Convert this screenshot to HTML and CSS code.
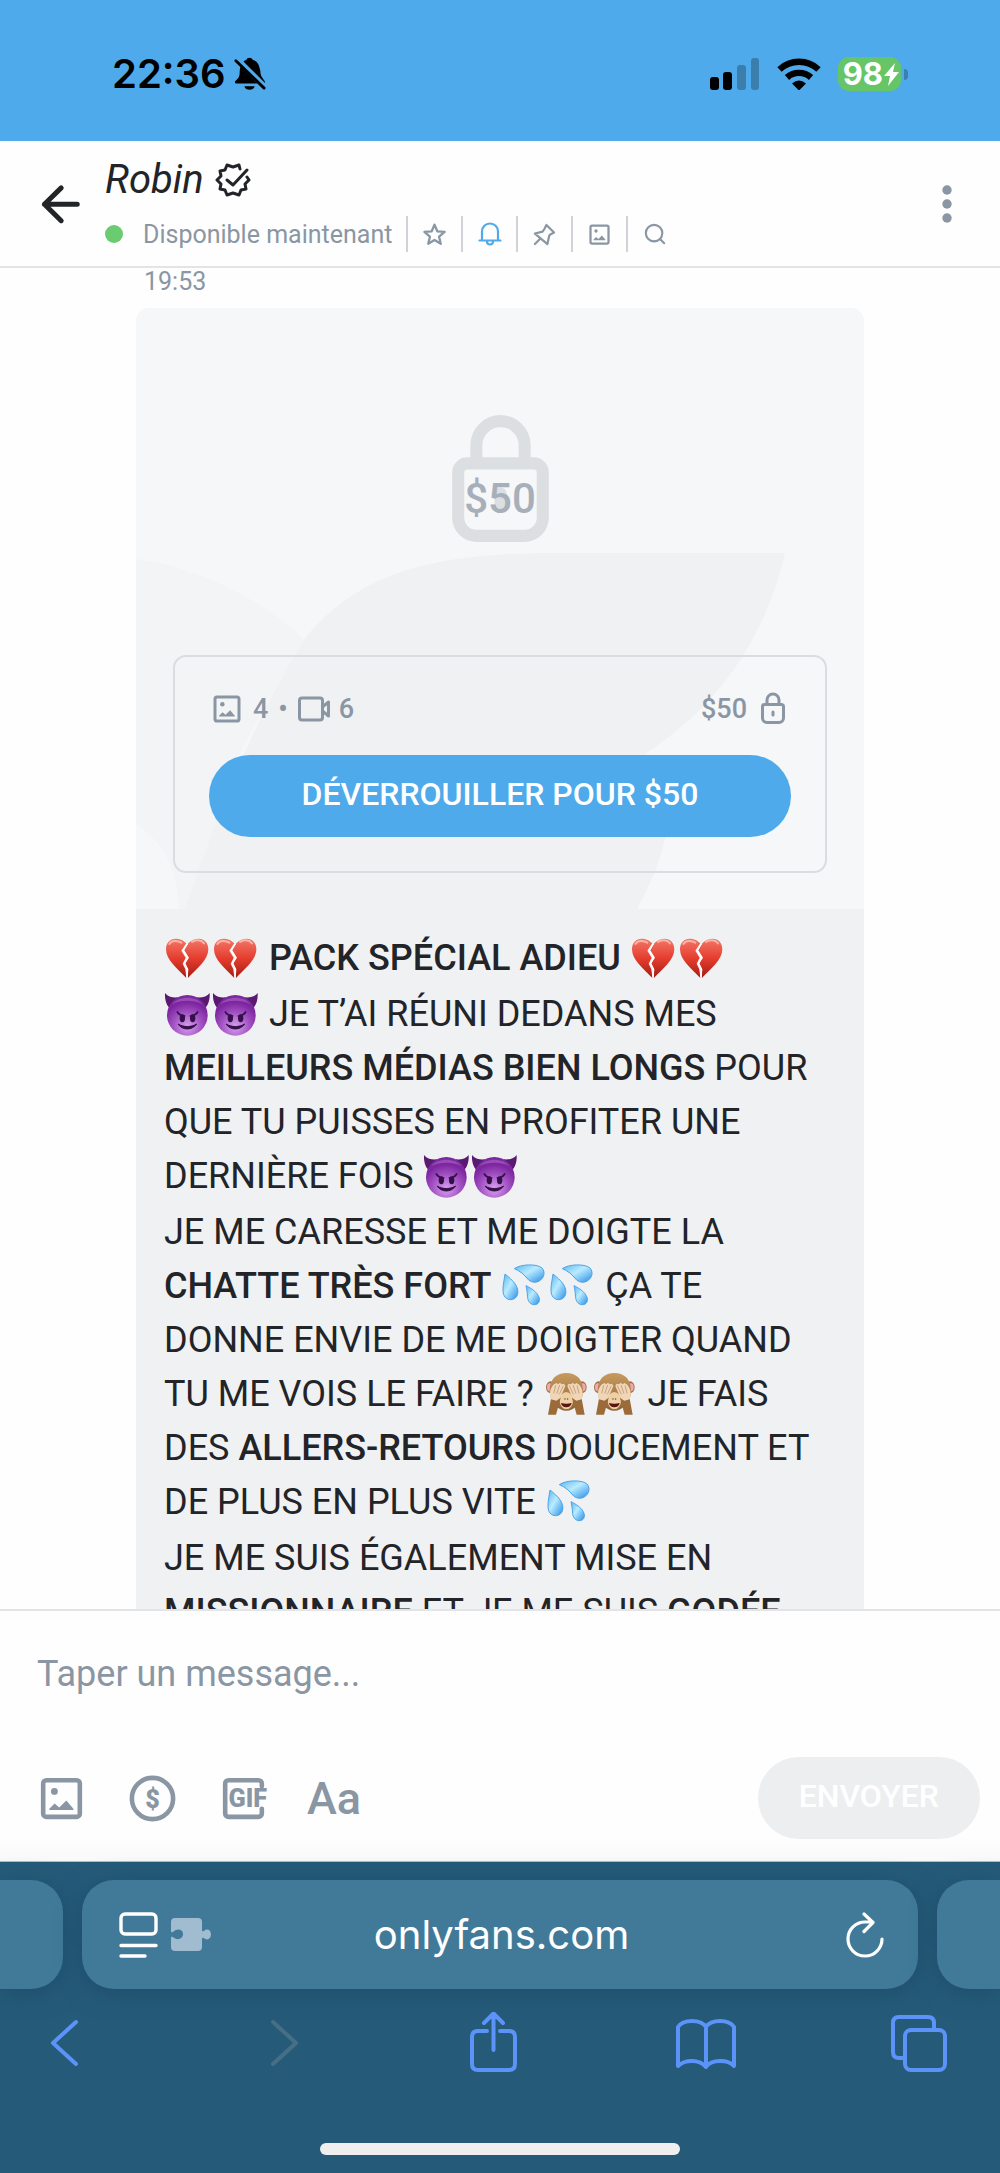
FILE: index.html
```html
<!DOCTYPE html>
<html lang="fr">
<head>
<meta charset="utf-8">
<meta name="viewport" content="width=device-width, initial-scale=1">
<title>Robin – Messages</title>
<link rel="stylesheet" href="styles.css">
</head>
<body>
<svg class="defs" aria-hidden="true">
  <defs>
    <linearGradient id="g-heart" x1="0" y1="0" x2="0" y2="1">
      <stop offset="0" stop-color="#f27867"/><stop offset=".5" stop-color="#e53d2e"/><stop offset="1" stop-color="#a81c14"/>
    </linearGradient>
    <radialGradient id="g-devil" cx=".5" cy=".78" r=".75">
      <stop offset="0" stop-color="#d8a2ee"/><stop offset=".45" stop-color="#a454c4"/><stop offset=".8" stop-color="#7d26a0"/><stop offset="1" stop-color="#7a2a9c"/>
    </radialGradient>
    <linearGradient id="g-drop" x1="0" y1="0" x2="1" y2="1">
      <stop offset="0" stop-color="#5fb4ee"/><stop offset=".45" stop-color="#b9ecff"/><stop offset="1" stop-color="#2b8de6"/>
    </linearGradient>
    <linearGradient id="g-fur" x1="0" y1="0" x2="0" y2="1">
      <stop offset="0" stop-color="#c79a5f"/><stop offset="1" stop-color="#8f6437"/>
    </linearGradient>
    <symbol id="e-heart" viewBox="0 0 144 144">
      <path d="M67 28C57 17 44 14 36 14 17 14 6 27 6 46c0 32 34 58 61 86l-3-26-8-17 9-18-13-21Z" fill="url(#g-heart)"/>
      <path d="M73 28c9-10 21-14 31-14 18 0 29 13 29 32 0 32-36 59-61 86l-1-27-8-16 12-18-14-22Z" fill="url(#g-heart)"/>
      <path d="M16 30c7-11 24-12 36-4M84 24c10-8 28-7 36 4" fill="none" stroke="#ffd0c8" stroke-width="6" stroke-linecap="round" opacity=".7"/>
      <path d="M70 29 57 49l14 21-9 18 9 18-2 24" fill="none" stroke="#fff" stroke-width="4"/>
    </symbol>
    <symbol id="e-devil" viewBox="0 0 144 144">
      <path d="M3 9c-1 20 4 36 13 44l27-31C27 24 11 20 3 9ZM137 9c1 20-4 36-13 44L97 22c16 2 32-2 40-13Z" fill="#5a1a72"/>
      <circle cx="70" cy="76" r="61" fill="url(#g-devil)"/>
      <path d="M25 42c20-25 70-25 90 0-25-13-65-13-90 0Z" fill="#c583df" opacity=".4"/>
      <ellipse cx="55" cy="85" rx="8" ry="12" fill="#35104a"/><ellipse cx="86" cy="85" rx="8" ry="12" fill="#35104a"/>
      <path d="M40 66q6 10 22 12M101 66q-6 10-22 12" fill="none" stroke="#35104a" stroke-width="5" stroke-linecap="round"/>
      <path d="M42 102c14 20 42 20 56 0-15 10-41 10-56 0Z" fill="#35104a" stroke="#35104a" stroke-width="3" stroke-linejoin="round"/>
    </symbol>
    <symbol id="e-drops" viewBox="0 0 144 144">
      <path d="M43 20C63 6 108 5 125 17c12 12 8 30-6 39-12 8-28 5-36-5C73 38 62 28 43 20Z" fill="url(#g-drop)" stroke="#4aa3ea" stroke-width="3"/>
      <path d="M15 36c14 12 34 27 38 47 3 18-7 30-21 30S9 102 9 84c0-18 4-32 6-48Z" fill="url(#g-drop)" stroke="#4aa3ea" stroke-width="3"/>
      <path d="M78 71c14 7 34 19 39 35 4 13-3 22-13 22-13 0-20-9-21-22-1-12-2-24-5-35Z" fill="url(#g-drop)" stroke="#4aa3ea" stroke-width="3"/>
    </symbol>
    <symbol id="e-monkey" viewBox="0 0 144 144">
      <ellipse cx="23" cy="52" rx="14" ry="18" fill="#a2733f"/><ellipse cx="117" cy="52" rx="14" ry="18" fill="#a2733f"/>
      <ellipse cx="20" cy="52" rx="8" ry="12" fill="#f0a9b4"/><ellipse cx="120" cy="52" rx="8" ry="12" fill="#f0a9b4"/>
      <path d="M20 62C20 26 42 9 70 9s50 17 50 53c0 36-26 60-50 60S20 98 20 62Z" fill="url(#g-fur)"/>
      <ellipse cx="70" cy="92" rx="20" ry="26" fill="#efcfa5"/>
      <circle cx="66" cy="87" r="2" fill="#5b3a1e"/><circle cx="74" cy="87" r="2" fill="#5b3a1e"/>
      <path d="M54 99q16 5 32 0c-2 17-30 17-32 0Z" fill="#5a1512"/>
      <path d="M15 134 25 80l28 3-14 51ZM125 134 115 80l-28 3 14 51Z" fill="#9b6c3a"/>
      <path d="M24 88c-8-16-1-36 9-45l7-4 5 4 6-5 5 5 7-2 4 7-15 36-12 8ZM116 88c8-16 1-36-9-45l-7-4-5 4-6-5-5 5-7-2-4 7 15 36 12 8Z" fill="#f1d5b8"/>
      <path d="M38 46 32 70M50 45 41 71M61 47 49 73M102 46l6 24M90 45l9 26M79 47l12 26" stroke="#c9a27c" stroke-width="3" fill="none"/>
    </symbol>
    <symbol id="i-image" viewBox="0 0 24 24">
      <rect x="4" y="4" width="16" height="16" rx="1.4" fill="none" stroke="currentColor" stroke-width="2"/>
      <circle cx="8.9" cy="8.9" r="1.5" fill="currentColor"/>
      <path d="M6.7 17v-.5L9 14.2l2 1.7 3.1-3 3.1 3.6v.5Z" fill="currentColor"/>
    </symbol>
    <symbol id="i-lock" viewBox="0 0 24 24">
      <path fill-rule="evenodd" fill="currentColor" d="M7 8V6a5 5 0 0 1 10 0v2h.5A2.5 2.5 0 0 1 20 10.500V18a4 4 0 0 1-4 4H8a4 4 0 0 1-4-4v-7.500A2.500 2.500 0 0 1 6.500 8Zm2 0h6V6a3 3 0 0 0-6 0Zm-2.500 2a.5.5 0 0 0-.5.5V18a2 2 0 0 0 2 2h8a2 2 0 0 0 2-2v-7.500a.5.5 0 0 0-.5-.5Z"/>
      <rect x="11" y="13" width="2" height="4" rx="1" fill="currentColor"/>
    </symbol>
  </defs>
</svg>

<div class="app">
  <div class="status-bar">
    <div class="status-group">
      <span class="clock">22:36</span>
      <svg width="32" height="34" viewBox="0 0 34 36" role="img" aria-label="Silencieux">
        <path d="M1 27c0-3 5-3 5-10C6 9 9 4 13 3c1-3 6-3 7 0 5 1 7 6 8 12 0 7 5 9 5 12 0 1-1 1-2 1H3c-1 0-2 0-2-1ZM11 31h11c-1 5-10 5-11 0Z"/>
        <path d="m1 0 33 33" stroke="#4eaaea" stroke-width="6"/>
        <path d="m2 4 30 29" stroke="#000" stroke-width="3" stroke-linecap="round"/>
      </svg>
    </div>
    <div class="status-group status-right">
      <svg width="50" height="34" viewBox="0 0 50 34" role="img" aria-label="Réseau">
        <rect y="20" width="9" height="13" rx="3"/><rect x="13" y="15" width="9" height="18" rx="3"/>
        <g opacity=".25"><rect x="27" y="8" width="9" height="25" rx="3"/><rect x="41" y="1" width="8" height="32" rx="3"/></g>
      </svg>
      <svg width="44" height="34" viewBox="0 0 44 34" role="img" aria-label="Wi-Fi">
        <g fill="none" stroke="#000" stroke-width="6.400"><path d="M2.500 12.500a28.600 28.600 0 0 1 39 0"/><path d="M10 20.500a18 18 0 0 1 24 0"/></g>
        <path d="M15 26.500q7-6 14 0l-6 6q-1 1-2 0Z"/>
      </svg>
      <span class="battery-wrap">
        <span class="battery">98<svg width="15" height="23" viewBox="0 0 15 23" aria-hidden="true"><path d="M11 0 0 13h6L4 23 15 9H9Z" fill="#fff"/></svg></span>
        <span class="battery-tip"></span>
      </span>
    </div>
  </div>

  <header class="chat-header">
    <button class="icon-btn" type="button" aria-label="Retour">
      <svg width="55" height="55" viewBox="0 0 24 24" fill="none" stroke="currentColor" stroke-width="2.200" stroke-linecap="round" stroke-linejoin="round"><path d="M19.300 12.300H5M12.300 5.200 5 12.300l7.300 7.200"/></svg>
    </button>
    <div class="chat-info">
      <h1 class="chat-name">Robin
        <svg width="36" height="36" viewBox="0 0 36 36" fill="none" stroke="currentColor" stroke-width="3" stroke-linecap="round" stroke-linejoin="round" role="img" aria-label="Vérifié"><path d="m25 7-1-4-6 2-6-2-2 5-5 1 1 5-4 4 4 4-1 5 5 1 2 5 6-2 6 2 2-5 5-1-1-5 4-4-2-3M12 18l6 5L32 8"/></svg>
      </h1>
      <div class="chat-meta">
        <span class="online-dot"></span>
        <span class="online-text">Disponible maintenant</span>
        <button class="meta-btn" type="button" aria-label="Favori"><svg width="25" height="25" viewBox="0 0 24 24" fill="none" stroke="currentColor" stroke-width="2.200" stroke-linejoin="round"><path d="m12 2.500 2.700 6.400 7 .6-5.300 4.600 1.600 6.800-6-3.600-6 3.600 1.600-6.800L2.300 9.500l7-.6Z"/></svg></button>
        <button class="meta-btn is-active" type="button" aria-label="Notifications"><svg width="24" height="24" viewBox="0 0 24 24" fill="none" stroke="currentColor" stroke-width="2.200" stroke-linecap="round" stroke-linejoin="round"><path d="M4 18V9.500a8 8 0 0 1 16 0V18M1.500 18.500h21M9 19.500c0 4 6 4 6 0"/></svg></button>
        <button class="meta-btn" type="button" aria-label="Épingler"><svg width="23" height="23" viewBox="0 0 24 24" fill="none" stroke="currentColor" stroke-width="2.300" stroke-linecap="round" stroke-linejoin="round"><path d="m14 2 8 8-4 2-1 1-2 9L2 11l8-2 2-3ZM7.500 16.500 2 22"/></svg></button>
        <button class="meta-btn" type="button" aria-label="Médias"><svg width="27" height="27"><use href="#i-image"/></svg></button>
        <button class="meta-btn" type="button" aria-label="Rechercher"><svg width="22" height="22" viewBox="0 0 24 24" fill="none" stroke="currentColor" stroke-width="2.300" stroke-linecap="round"><circle cx="11" cy="11" r="9"/><path d="m18 18 4 4"/></svg></button>
      </div>
    </div>
    <button class="icon-btn more" type="button" aria-label="Plus d'options">
      <svg width="10" height="38" viewBox="0 0 10 38" fill="currentColor"><circle cx="5" cy="5" r="4.700"/><circle cx="5" cy="19" r="4.700"/><circle cx="5" cy="33" r="4.700"/></svg>
    </button>
  </header>

  <main class="messages">
    <time class="msg-time">19:53</time>
    <article class="card">
      <div class="locked">
        <svg class="locked-bg" viewBox="14 21 1540 1519" preserveAspectRatio="none" aria-hidden="true">
          <path d="M14 655C150 680 270 750 370 858L300 1000 240 1130 118 1540H106C100 1430 70 1370 14 1325Z" fill="#f3f4f6"/>
          <path d="M1387 640H900C620 640 480 700 370 858 310 980 240 1110 118 1540H1074Q1120 1440 1134 1357L1160 1190 1090 1148C1230 1040 1340 880 1387 640Z" fill="#f0f1f3"/>
        </svg>
        <div class="hero">
          <svg width="145" height="145"><use href="#i-lock"/></svg>
          <span class="hero-price">$50</span>
        </div>
        <div class="unlock">
          <div class="unlock-row">
            <span class="counts">
              <svg width="36" height="36"><use href="#i-image"/></svg>
              <span>4</span><span class="bullet">•</span>
              <svg width="34" height="36" viewBox="1 0 34 36" fill="none" stroke="currentColor" stroke-width="3" stroke-linejoin="round" role="img" aria-label="Vidéos"><rect x="3.500" y="7" width="23" height="22" rx="2.500"/><path d="M27 15.500 32.500 11v14L27 20.500"/></svg>
              <span>6</span>
            </span>
            <span class="price">$50 <svg width="36" height="36"><use href="#i-lock"/></svg></span>
          </div>
          <button class="unlock-btn" type="button">DÉVERROUILLER POUR $50</button>
        </div>
      </div>
      <div class="msg-text">
        <p><svg class="emoji" role="img" aria-label="💔"><use href="#e-heart"/></svg><svg class="emoji" role="img" aria-label="💔"><use href="#e-heart"/></svg> <strong>PACK SPÉCIAL ADIEU</strong> <svg class="emoji" role="img" aria-label="💔"><use href="#e-heart"/></svg><svg class="emoji" role="img" aria-label="💔"><use href="#e-heart"/></svg></p>
        <p><svg class="emoji" role="img" aria-label="😈"><use href="#e-devil"/></svg><svg class="emoji" role="img" aria-label="😈"><use href="#e-devil"/></svg> JE T’AI RÉUNI DEDANS MES <strong>MEILLEURS MÉDIAS BIEN LONGS</strong> POUR QUE TU PUISSES EN PROFITER UNE DERNIÈRE FOIS <svg class="emoji" role="img" aria-label="😈"><use href="#e-devil"/></svg><svg class="emoji" role="img" aria-label="😈"><use href="#e-devil"/></svg></p>
        <p>JE ME CARESSE ET ME DOIGTE LA <strong>CHATTE TRÈS FORT</strong> <svg class="emoji" role="img" aria-label="💦"><use href="#e-drops"/></svg><svg class="emoji" role="img" aria-label="💦"><use href="#e-drops"/></svg> ÇA TE DONNE ENVIE DE ME DOIGTER QUAND TU ME VOIS LE FAIRE ? <svg class="emoji" role="img" aria-label="🙈"><use href="#e-monkey"/></svg><svg class="emoji" role="img" aria-label="🙈"><use href="#e-monkey"/></svg> JE FAIS DES <strong>ALLERS-RETOURS</strong> DOUCEMENT ET DE PLUS EN PLUS VITE <svg class="emoji" role="img" aria-label="💦"><use href="#e-drops"/></svg></p>
        <p>JE ME SUIS ÉGALEMENT MISE EN <strong>MISSIONNAIRE</strong> ET JE ME SUIS <strong>GODÉE</strong></p>
      </div>
    </article>
  </main>

  <form class="composer">
    <input class="composer-input" type="text" placeholder="Taper un message..." aria-label="Taper un message">
    <div class="composer-row">
      <button class="tool" type="button" aria-label="Image"><svg width="55" height="55"><use href="#i-image"/></svg></button>
      <button class="tool" type="button" aria-label="Pourboire"><svg width="55" height="55" viewBox="0 0 24 24"><circle cx="12" cy="12" r="9" fill="none" stroke="currentColor" stroke-width="2"/><text class="tip-sign" x="12" y="16" text-anchor="middle">$</text></svg></button>
      <button class="tool" type="button" aria-label="GIF"><svg width="55" height="55" viewBox="0 0 24 24"><path d="M20 6.700V5.500A1.500 1.500 0 0 0 18.500 4h-13A1.500 1.500 0 0 0 4 5.500v13A1.500 1.500 0 0 0 5.500 20h13a1.500 1.500 0 0 0 1.500-1.500v-2" fill="none" stroke="currentColor" stroke-width="2" stroke-linecap="round"/><text class="gif-sign" x="13.900" y="15.900" text-anchor="middle">GIF</text></svg></button>
      <button class="tool tool-text" type="button" aria-label="Mise en forme">Aa</button>
      <button class="send" type="submit" disabled>ENVOYER</button>
    </div>
  </form>

  <footer class="browser">
    <div class="tabs-row">
      <div class="tab-stub tab-left"></div>
      <div class="address">
        <div class="address-side">
          <svg width="39" height="46" viewBox="0 0 39 46" fill="none" stroke="#fff" stroke-width="3.400" stroke-linecap="round" role="img" aria-label="Menu de page"><rect x="2" y="2" width="35" height="20" rx="4"/><path d="M2 33.500h35M2 44h24"/></svg>
          <svg width="40" height="33" viewBox="0 0 40 33" role="img" aria-label="Extensions"><path fill="#a1bbd0" d="M4 0h23q4 0 4 4v8q0 2 2 1c3-3 7-1 7 3.500S36 23 33 20q-2-1-2 1v8q0 4-4 4H4q-4 0-4-4V20q0-2 2-1c4 4 10 2 10-3s-6-6-10-2q-2 1-2-1V4q0-4 4-4Z"/></svg>
        </div>
        <span class="url">onlyfans.com</span>
        <button class="reload" type="button" aria-label="Recharger"><svg width="38" height="46" viewBox="0 0 38 46" fill="none" stroke="#fff" stroke-width="3.200" stroke-linecap="round" stroke-linejoin="round"><path d="M36 27a17 17 0 1 1-17-17h8M18 2l9 8.500-9 9"/></svg></button>
      </div>
      <div class="tab-stub tab-right"></div>
    </div>
    <nav class="toolbar" aria-label="Navigation">
      <button type="button" aria-label="Précédent"><svg width="62" height="62" viewBox="0 0 62 62"><path d="M43 10 20 31l23 21"/></svg></button>
      <button type="button" class="is-off" aria-label="Suivant" disabled><svg width="62" height="62" viewBox="0 0 62 62"><path d="m26 10 23 21-23 21"/></svg></button>
      <button type="button" aria-label="Partager"><svg width="62" height="62" viewBox="0 0 62 62"><path d="M26 19h-9q-6 0-6 6v27q0 6 6 6h31q6 0 6-6V25q0-6-6-6h-9M32.500 38V2M23 11l9.500-9.500L42 11"/></svg></button>
      <button type="button" aria-label="Signets"><svg width="62" height="62" viewBox="0 0 62 62"><path d="M32 15q-4-6-14-6T4 15v39q5-5 14-5t14 6q4-6 14-6t14 5V15q-4-6-14-6t-14 6v40"/></svg></button>
      <button type="button" aria-label="Onglets"><svg width="62" height="62" viewBox="0 0 62 62"><path d="M16 46h-5q-6 0-6-6V11q0-6 6-6h29q6 0 6 6v6"/><rect x="17" y="18" width="40" height="40" rx="6"/></svg></button>
    </nav>
    <div class="home-indicator"></div>
  </footer>
</div>
</body>
</html>
```
FILE: styles.css
```css
* { box-sizing: border-box; }
body { margin: 0; font-family: Roboto, "Liberation Sans", sans-serif; color: #222428; background: #fefefe; }
button, input { font: inherit; color: inherit; background: none; border: 0; padding: 0; margin: 0; }
svg { display: block; flex: none; }
.defs { position: absolute; width: 0; height: 0; }

.app { display: flex; flex-direction: column; height: 100vh; }

/* phone status bar */
.status-bar { display: flex; justify-content: space-between; align-items: center; padding: 50px 92px 43px 112px; background: #4eaaea; color: #000; }
.status-group { display: flex; align-items: center; gap: 8px; }
.status-right { gap: 17px; }
.clock { font: 600 40px/48px Inter, sans-serif; }
.battery-wrap { display: flex; align-items: center; gap: 3px; }
.battery { display: flex; align-items: center; gap: 1px; height: 34px; padding: 0 2px 0 5px; border-radius: 11px; background: #66c566; color: #fff; font: 700 31px/34px Inter, sans-serif; }
.battery-tip { width: 4px; height: 11px; border-radius: 0 4px 4px 0; background: #3b80b0; }

/* chat header */
.chat-header { display: flex; align-items: center; padding: 14px 48px 14px 33px; border-bottom: 2px solid #e3e4e8; }
.icon-btn { display: flex; }
.more { color: #8a96a3; }
.chat-info { flex: 1; display: flex; flex-direction: column; gap: 11px; padding-left: 17px; }
.chat-name { display: flex; align-items: center; gap: 11px; margin: 0; font-size: 40px; font-weight: 400; font-style: italic; line-height: 50px; }
.chat-meta { display: flex; align-items: center; height: 36px; color: #8a96a3; font-size: 25px; }
.online-dot { width: 18px; height: 18px; margin-right: 20px; border-radius: 50%; background: #6acb70; }
.online-text { margin-right: 14px; }
.meta-btn { display: flex; align-items: center; justify-content: center; width: 55px; height: 36px; border-left: 2px solid #d0d4d9; }
.is-active { color: #4eaaea; }

/* conversation */
.messages { flex: 1; min-height: 0; overflow: hidden; padding: 0 136px; }
.msg-time { display: block; padding: 0 8px; margin-bottom: 12px; color: #8a96a3; font-size: 25px; line-height: 28px; }
.card { border-radius: 14px 14px 0 0; overflow: hidden; background: #f0f1f3; }
.locked { position: relative; padding: 0 37px 36px; background: #f6f7f9; }
.locked-bg { position: absolute; inset: 0; width: 100%; height: 100%; }
.hero { position: relative; display: grid; place-items: center; padding: 101px 0; color: #dcdfe1; }
.hero > * { grid-area: 1 / 1; }
.hero-price { position: relative; padding-top: 34px; color: #a7afba; font-size: 42px; font-weight: 500; line-height: 46px; }
.unlock { position: relative; padding: 34px; border: 2px solid #dadce1; border-radius: 13px; }
.unlock-row { display: flex; justify-content: space-between; align-items: center; margin-bottom: 28px; color: #8a96a3; font-size: 27px; font-weight: 500; line-height: 36px; }
.counts, .price { display: flex; align-items: center; gap: 8px; }
.bullet { margin: 0 1px 0 2px; }
.unlock-btn { display: block; width: 100%; border-radius: 41px; background: #4eaaea; color: #fff; font-size: 32px; font-weight: 500; line-height: 78px; padding-bottom: 4px; }
.msg-text { display: flex; flex-direction: column; gap: 2px; padding: 22px 44px 22px 28px; font-size: 36px; line-height: 54px; }
.msg-text p { margin: 0; }
.msg-text strong { font-weight: 500; }
.emoji { display: inline-block; width: 48px; height: 48px; vertical-align: -12px; }

/* composer */
.composer { padding: 36px 20px 22px 34px; border-top: 2px solid #e3e4e8; border-bottom: 1px solid #b3bcc2; background: linear-gradient(#fefefe 90%, #f9f9f9); }
.composer-input { display: block; width: 100%; height: 54px; padding: 0 3px; margin-bottom: 56px; font-size: 36px; outline: 0; }
.composer-input::placeholder { color: #8a96a3; opacity: 1; }
.composer-row { display: flex; align-items: center; gap: 36px; color: #8a96a3; }
.tool { display: flex; }
.tool-text { font-size: 45px; font-weight: 500; line-height: 55px; }
.tip-sign { font: 900 11px Roboto, sans-serif; fill: currentColor; }
.gif-sign { font: 900 11px Roboto, sans-serif; fill: currentColor; }
.send { margin-left: auto; padding: 0 41px 4px; border-radius: 41px; background: #edeef0; color: #fff; font-size: 32px; font-weight: 500; line-height: 78px; }

/* browser chrome */
.browser { padding: 18px 0; background: #255b79; }
.tabs-row { display: flex; gap: 19px; }
.tab-stub, .address { height: 109px; background: #417a98; box-shadow: 0 4px 24px #1f4d6c; }
.tab-stub { width: 63px; }
.tab-left { border-radius: 0 32px 32px 0; }
.tab-right { border-radius: 32px 0 0 32px; }
.address { flex: 1; display: grid; grid-template-columns: 1fr auto 1fr; align-items: center; padding: 0 34px 0 37px; border-radius: 32px; }
.address-side { display: flex; align-items: center; gap: 13px; }
.url { color: #fff; font: 400 40px/48px Inter, sans-serif; }
.reload { justify-self: end; }
.toolbar { display: flex; justify-content: space-between; padding: 23px 50px 69px 33px; color: #5b93f8; }
.toolbar svg { fill: none; stroke: currentColor; stroke-width: 4; stroke-linecap: round; stroke-linejoin: round; }
.is-off { color: #466f86; }
.home-indicator { width: 36%; height: 12px; margin: 0 auto; border-radius: 6px; background: #efefef; }
```
